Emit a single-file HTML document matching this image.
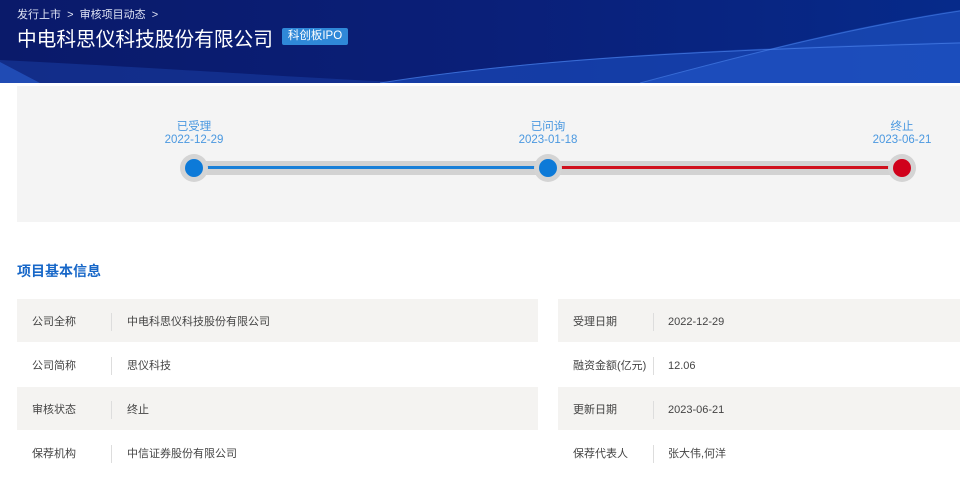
<!DOCTYPE html>
<html><head><meta charset="utf-8"><style>
*{margin:0;padding:0;box-sizing:border-box}
body{width:960px;height:468px;overflow:hidden;background:#fff;font-family:"Liberation Sans","Noto Sans CJK SC",sans-serif;position:relative}
.hdr{position:absolute;left:0;top:0;width:960px;height:83px;background:linear-gradient(90deg,#0a1a6a 0%,#0a1f78 50%,#062a8a 100%);overflow:hidden}
.crumb{position:absolute;left:17px;top:6px;color:#dfe4f5;font-size:11px}
.title{position:absolute;left:17px;top:23px;color:#fff;font-size:19.7px;white-space:nowrap}
.tag{position:absolute;left:282px;top:28px;width:66px;height:17px;background:#2f88d8;color:#fff;font-size:11.5px;line-height:17px;text-align:center;border-radius:2px}
.panel{position:absolute;left:17px;top:86px;width:943px;height:136px;background:#f4f4f4}
.lbl{position:absolute;color:#4a98e0;font-size:11.5px;text-align:center;line-height:13px;width:80px}
.track{position:absolute;top:161px;height:14px;left:194px;width:708px;background:#d2d2d2}
.ln{position:absolute;top:166px;height:3px}
.dot{position:absolute;width:28px;height:28px;border-radius:50%;background:#d4d4d4;top:154px}
.dot i{position:absolute;left:5px;top:5px;width:18px;height:18px;border-radius:50%}
h2{position:absolute;left:17px;top:261px;font-size:14px;color:#1767c8;font-weight:bold}
.row{position:absolute;height:43px;font-size:11px;color:#444;line-height:47px}
.g{background:#f4f3f1}
.row span{position:absolute}
.row b{position:absolute;top:14px;width:1px;height:18px;background:#ddd}
</style></head><body>
<div class="hdr">
<svg width="960" height="83" style="position:absolute;left:0;top:0">
<path d="M0 60 C200 70 300 78 420 83 L0 83Z" fill="#1a3fa8" opacity=".5"/>
<path d="M380 83 C550 55 750 48 960 42 L960 83Z" fill="#1a48b8" opacity=".7"/>
<path d="M640 83 C760 50 860 25 960 10 L960 83Z" fill="#2256c8" opacity=".6"/>
<path d="M380 83 C550 56 750 49 960 43" stroke="#4a80e8" fill="none" stroke-width="1" opacity=".7"/>
<path d="M640 83 C760 51 860 26 960 11" stroke="#4a80e8" fill="none" stroke-width="1" opacity=".6"/>
<path d="M0 62 L40 83 L0 83Z" fill="#2a5fd0" opacity=".6"/>
</svg>
<div class="crumb">发行上市 &nbsp;&gt;&nbsp; 审核项目动态 &nbsp;&gt;</div>
<div class="title">中电科思仪科技股份有限公司</div>
<div class="tag">科创板IPO</div>
</div>
<div class="panel"></div>
<div class="lbl" style="left:154px;top:121px">已受理<br>2022-12-29</div>
<div class="lbl" style="left:508px;top:121px">已问询<br>2023-01-18</div>
<div class="lbl" style="left:862px;top:121px">终止<br>2023-06-21</div>
<div class="track"></div>
<div class="ln" style="left:194px;width:354px;background:#1a80d8"></div>
<div class="ln" style="left:548px;width:354px;background:#d0111d"></div>
<div class="dot" style="left:180px"><i style="background:#0d7ad8"></i></div>
<div class="dot" style="left:534px"><i style="background:#0d7ad8"></i></div>
<div class="dot" style="left:888px"><i style="background:#d0011b"></i></div>
<h2>项目基本信息</h2>
<div class="row g" style="left:17px;top:299px;width:521px"><span style="left:15px">公司全称</span><b style="left:94px"></b><span style="left:110px">中电科思仪科技股份有限公司</span></div>
<div class="row" style="left:17px;top:343px;width:521px"><span style="left:15px">公司简称</span><b style="left:94px"></b><span style="left:110px">思仪科技</span></div>
<div class="row g" style="left:17px;top:387px;width:521px"><span style="left:15px">审核状态</span><b style="left:94px"></b><span style="left:110px">终止</span></div>
<div class="row" style="left:17px;top:431px;width:521px"><span style="left:15px">保荐机构</span><b style="left:94px"></b><span style="left:110px">中信证券股份有限公司</span></div>
<div class="row g" style="left:558px;top:299px;width:402px"><span style="left:15px">受理日期</span><b style="left:95px"></b><span style="left:110px">2022-12-29</span></div>
<div class="row" style="left:558px;top:343px;width:402px"><span style="left:15px">融资金额(亿元)</span><b style="left:95px"></b><span style="left:110px">12.06</span></div>
<div class="row g" style="left:558px;top:387px;width:402px"><span style="left:15px">更新日期</span><b style="left:95px"></b><span style="left:110px">2023-06-21</span></div>
<div class="row" style="left:558px;top:431px;width:402px"><span style="left:15px">保荐代表人</span><b style="left:95px"></b><span style="left:110px">张大伟,何洋</span></div>
</body></html>
